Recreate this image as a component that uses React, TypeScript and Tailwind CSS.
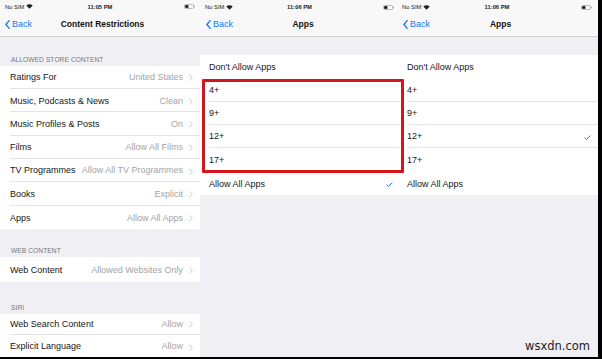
import React from "react";

const BLUE = "#0a7aff";

function Wifi() {
  return (
    <svg width="7" height="5" viewBox="0 0 7 5" className="ml-[2px]">
      <path d="M0.3 1.6 A4.5 4.5 0 0 1 6.7 1.6 L3.5 4.8 Z" fill="#222" />
    </svg>
  );
}

function Battery() {
  return (
    <svg width="11" height="5" viewBox="0 0 11 5">
      <rect x="0.5" y="0.5" width="9" height="4" rx="1" fill="none" stroke="#aaa" strokeWidth="0.8" />
      <rect x="1.2" y="1.2" width="3.2" height="2.6" fill="#111" />
      <rect x="9.8" y="1.6" width="1" height="1.8" fill="#aaa" />
    </svg>
  );
}

function StatusBar({ time, pl, pr }: { time: string; pl: string; pr: string }) {
  return (
    <div className={`grid grid-cols-3 items-center h-[13px] pt-[1px] bg-[#f8f8f8] ${pl} ${pr} text-[5.8px] text-[#222]`}>
      <div className="flex items-center">
        <span>No SIM</span>
        <Wifi />
      </div>
      <div className="text-center font-semibold">{time}</div>
      <div className="flex justify-end">
        <Battery />
      </div>
    </div>
  );
}

function NavBar({ title, pl }: { title: string; pl: string }) {
  return (
    <div className={`grid grid-cols-[1fr_auto_1fr] items-center h-[24px] bg-[#f8f8f8] border-b border-[#d2d2d6] ${pl}`}>
      <div className="flex items-center text-[9px]" style={{ color: BLUE }}>
        <svg width="5" height="9" viewBox="0 0 5 9" className="mr-[2px]">
          <path d="M4.2 0.6L0.9 4.5L4.2 8.4" fill="none" stroke={BLUE} strokeWidth="1.3" strokeLinecap="round" strokeLinejoin="round" />
        </svg>
        <span>Back</span>
      </div>
      <div className="text-[8.5px] font-semibold text-[#111]">{title}</div>
      <div />
    </div>
  );
}

function Chev() {
  return (
    <svg width="4" height="7" viewBox="0 0 4 7" className="ml-[6px] shrink-0">
      <path d="M0.6 0.6L3.3 3.5L0.6 6.4" fill="none" stroke="#c4c4c9" strokeWidth="0.9" />
    </svg>
  );
}

function Check() {
  return (
    <svg width="7" height="5" viewBox="0 0 7 5">
      <path d="M0.6 2.6L2.5 4.3L6.4 0.6" fill="none" stroke={BLUE} strokeWidth="1" />
    </svg>
  );
}

function SettingRow({ label, value, last, h }: { label: string; value: string; last?: boolean; h: string }) {
  return (
    <div className={`flex bg-white pl-[10px] ${h}`}>
      <div className={`flex flex-1 items-center pr-[7px] pt-[2px] ${last ? "" : "border-b border-[#e4e4e7]"}`}>
        <span className="text-[9px] text-[#161616] whitespace-nowrap">{label}</span>
        <span className="flex-1 text-right text-[9px] text-[#a3a3a8] whitespace-nowrap ml-[4px]">{value}</span>
        <Chev />
      </div>
    </div>
  );
}

function Header({ text, h }: { text: string; h: string }) {
  return (
    <div className={`flex items-end pl-[11px] pb-[2px] ${h}`}>
      <span className="text-[6.6px] leading-[8px] text-[#77777c] tracking-[0.1px]">{text}</span>
    </div>
  );
}

function ChoiceRow({ label, checked, line, pl }: { label: string; checked?: boolean; line?: boolean; pl: string }) {
  return (
    <div className={`flex bg-white h-[23.33px] ${pl}`}>
      <div className={`flex flex-1 items-center justify-between pr-[7px] pt-[2px] ${line ? "border-b border-[#e4e4e7]" : ""}`}>
        <span className="text-[9px] text-[#161616]">{label}</span>
        {checked ? <Check /> : null}
      </div>
    </div>
  );
}

function AppsPanel({ checked, pl, w, statusPl, navPl }: { checked: string; pl: string; w: string; statusPl: string; navPl: string }) {
  const items = ["Don't Allow Apps", "4+", "9+", "12+", "17+", "Allow All Apps"];
  return (
    <div className={`flex flex-col h-full bg-[#efeff4] ${w}`}>
      <StatusBar time="11:06 PM" pl={statusPl} pr="pr-[6px]" />
      <NavBar title="Apps" pl={navPl} />
      <div className="h-[18px]" />
      <div className="flex flex-col">
        {items.map((it, i) => (
          <ChoiceRow key={it} label={it} checked={it === checked} line={i >= 1 && i <= 3} pl={pl} />
        ))}
      </div>
    </div>
  );
}

export default function App() {
  return (
    <div className="relative w-[602px] h-[359px] bg-black overflow-hidden font-['Liberation_Sans',Arial,sans-serif]">
      <div className="flex h-[357px]">
        <div className="flex flex-col w-[200px] h-full bg-[#efeff4]">
          <StatusBar time="11:05 PM" pl="pl-[5px]" pr="pr-[5px]" />
          <NavBar title="Content Restrictions" pl="pl-[5px]" />
          <Header text="ALLOWED STORE CONTENT" h="h-[29px]" />
          <SettingRow h="h-[23.4px]" label="Ratings For" value="United States" />
          <SettingRow h="h-[23.4px]" label="Music, Podcasts & News" value="Clean" />
          <SettingRow h="h-[23.4px]" label="Music Profiles & Posts" value="On" />
          <SettingRow h="h-[23.4px]" label="Films" value="Allow All Films" />
          <SettingRow h="h-[23.4px]" label="TV Programmes" value="Allow All TV Programmes" />
          <SettingRow h="h-[23.4px]" label="Books" value="Explicit" />
          <SettingRow h="h-[23.4px]" label="Apps" value="Allow All Apps" last />
          <Header text="WEB CONTENT" h="h-[28px]" />
          <SettingRow h="h-[25px]" label="Web Content" value="Allowed Websites Only" last />
          <Header text="SIRI" h="h-[32px]" />
          <SettingRow h="h-[21.5px]" label="Web Search Content" value="Allow" />
          <SettingRow h="h-[22px]" label="Explicit Language" value="Allow" last />
        </div>
        <AppsPanel checked="Allow All Apps" pl="pl-[9px]" w="w-[200px]" statusPl="pl-[5px]" navPl="pl-[6px]" />
        <AppsPanel checked="12+" pl="pl-[7px]" w="w-[198px]" statusPl="pl-[2px]" navPl="pl-[3px]" />
      </div>
      <div className="absolute left-[202px] top-[79px] w-[202px] h-[94px] border-[3px] border-[#d4161c] rounded-[1px]" />
      <div className="absolute right-[12px] top-[339px] text-[11.5px] leading-[14px] text-[#1c1c1c] font-['DejaVu_Sans',sans-serif]">
        wsxdn.com
      </div>
    </div>
  );
}
